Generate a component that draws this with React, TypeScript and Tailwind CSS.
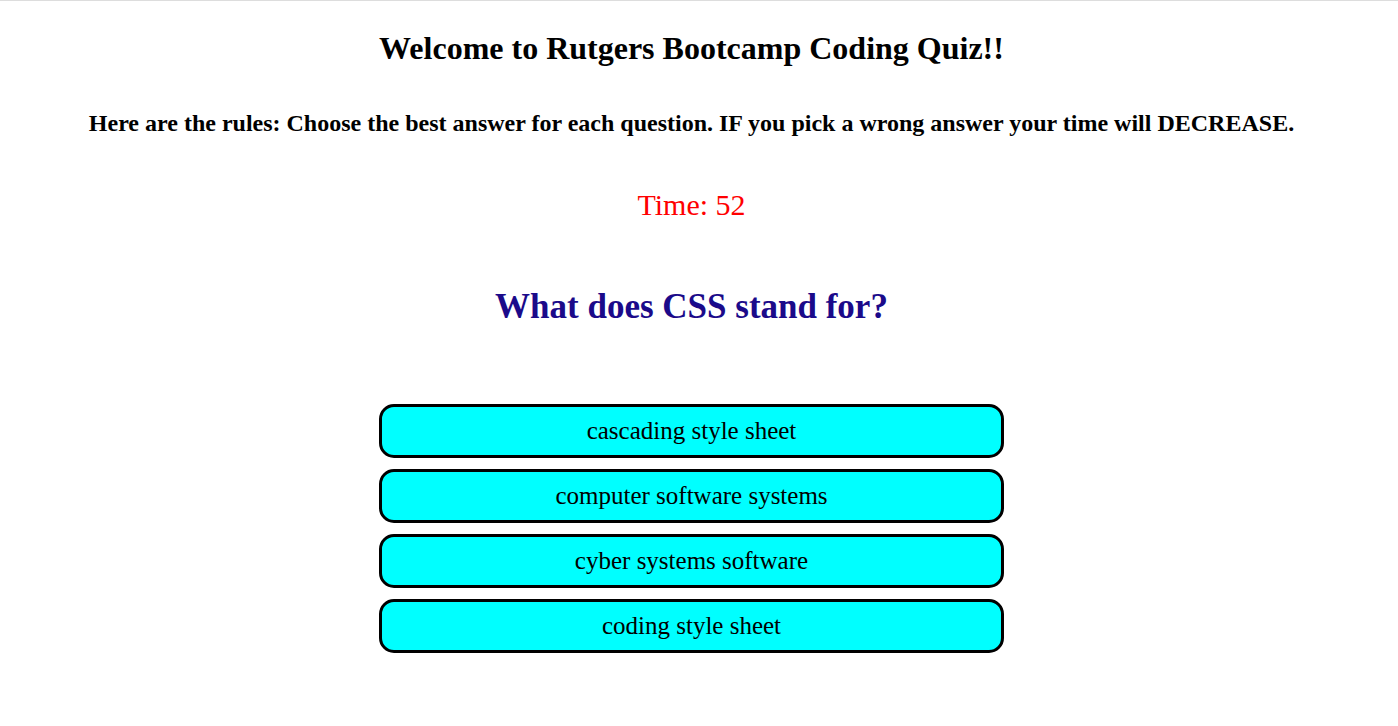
const answers = [
  'cascading style sheet',
  'computer software systems',
  'cyber systems software',
  'coding style sheet',
]

export default function App() {
  return (
    <div className="min-h-[726px] bg-white border-t border-[#dddddd] font-['Liberation_Serif','Times_New_Roman',serif] text-black">
      {/* page is laid out as if a 15px scrollbar takes the right edge */}
      <div className="flex flex-col items-center pr-[15px]">
        <h1 className="mt-[29px] text-[32px] leading-[36px] font-bold">
          Welcome to Rutgers Bootcamp Coding Quiz!!
        </h1>
        <p className="mt-[43px] text-[24px] leading-[28px] font-bold whitespace-nowrap">
          Here are the rules: Choose the best answer for each question. IF you pick a wrong answer your time will DECREASE.
        </p>
        <div className="mt-[51px] text-[30px] leading-[34px] text-[#ff0000]">Time: 52</div>
        <h2 className="mt-[65px] text-[35px] leading-[40px] font-bold text-[#1b0a8a]">
          What does CSS stand for?
        </h2>
        <div className="mt-[77px] flex flex-col gap-[11px]">
          {answers.map(a => (
            <button
              key={a}
              className="w-[625px] h-[54px] border-[3px] border-black rounded-[15px] bg-[#00ffff] text-[25px] leading-[28px] text-black"
            >
              {a}
            </button>
          ))}
        </div>
      </div>
    </div>
  )
}
